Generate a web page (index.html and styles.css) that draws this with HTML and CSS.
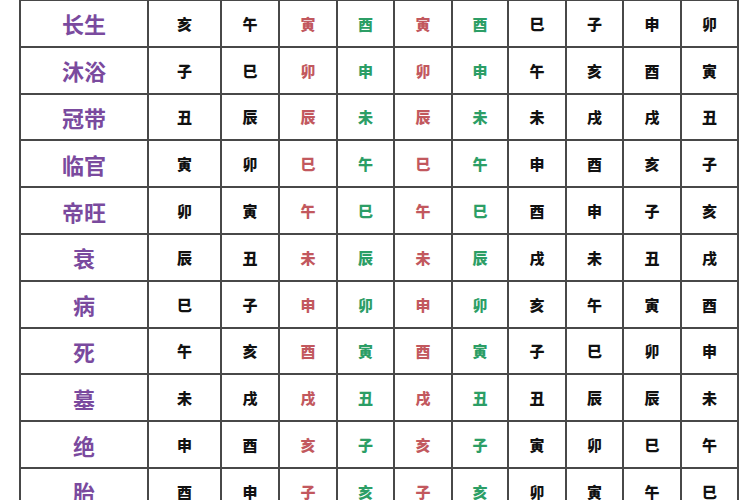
FILE: index.html
```html
<!DOCTYPE html>
<html lang="zh">
<head>
<meta charset="utf-8">
<title>十二长生表</title>
<link rel="stylesheet" href="styles.css">
</head>
<body>
<div class="table">
  <div class="lbl">长生</div><div class="c">亥</div><div class="c">午</div><div class="c r">寅</div><div class="c g">酉</div><div class="c r">寅</div><div class="c g">酉</div><div class="c">巳</div><div class="c">子</div><div class="c">申</div><div class="c">卯</div>
  <div class="lbl">沐浴</div><div class="c">子</div><div class="c">巳</div><div class="c r">卯</div><div class="c g">申</div><div class="c r">卯</div><div class="c g">申</div><div class="c">午</div><div class="c">亥</div><div class="c">酉</div><div class="c">寅</div>
  <div class="lbl">冠带</div><div class="c">丑</div><div class="c">辰</div><div class="c r">辰</div><div class="c g">未</div><div class="c r">辰</div><div class="c g">未</div><div class="c">未</div><div class="c">戌</div><div class="c">戌</div><div class="c">丑</div>
  <div class="lbl">临官</div><div class="c">寅</div><div class="c">卯</div><div class="c r">巳</div><div class="c g">午</div><div class="c r">巳</div><div class="c g">午</div><div class="c">申</div><div class="c">酉</div><div class="c">亥</div><div class="c">子</div>
  <div class="lbl">帝旺</div><div class="c">卯</div><div class="c">寅</div><div class="c r">午</div><div class="c g">巳</div><div class="c r">午</div><div class="c g">巳</div><div class="c">酉</div><div class="c">申</div><div class="c">子</div><div class="c">亥</div>
  <div class="lbl">衰</div><div class="c">辰</div><div class="c">丑</div><div class="c r">未</div><div class="c g">辰</div><div class="c r">未</div><div class="c g">辰</div><div class="c">戌</div><div class="c">未</div><div class="c">丑</div><div class="c">戌</div>
  <div class="lbl">病</div><div class="c">巳</div><div class="c">子</div><div class="c r">申</div><div class="c g">卯</div><div class="c r">申</div><div class="c g">卯</div><div class="c">亥</div><div class="c">午</div><div class="c">寅</div><div class="c">酉</div>
  <div class="lbl">死</div><div class="c">午</div><div class="c">亥</div><div class="c r">酉</div><div class="c g">寅</div><div class="c r">酉</div><div class="c g">寅</div><div class="c">子</div><div class="c">巳</div><div class="c">卯</div><div class="c">申</div>
  <div class="lbl">墓</div><div class="c">未</div><div class="c">戌</div><div class="c r">戌</div><div class="c g">丑</div><div class="c r">戌</div><div class="c g">丑</div><div class="c">丑</div><div class="c">辰</div><div class="c">辰</div><div class="c">未</div>
  <div class="lbl">绝</div><div class="c">申</div><div class="c">酉</div><div class="c r">亥</div><div class="c g">子</div><div class="c r">亥</div><div class="c g">子</div><div class="c">寅</div><div class="c">卯</div><div class="c">巳</div><div class="c">午</div>
  <div class="lbl">胎</div><div class="c">酉</div><div class="c">申</div><div class="c r">子</div><div class="c g">亥</div><div class="c r">子</div><div class="c g">亥</div><div class="c">卯</div><div class="c">寅</div><div class="c">午</div><div class="c">巳</div>
</div>
</body>
</html>
```
FILE: styles.css
```css
html, body {
  margin: 0;
  padding: 0;
  background: #ffffff;
  overflow: hidden;
}
body {
  font-family: "Noto Sans CJK SC", "Noto Sans CJK TC", sans-serif;
}
.table {
  display: grid;
  grid-template-columns: 126px 71px 56px 56px 55px 56px 54px 56px 55px 56px 55px;
  grid-auto-rows: 44.8px;
  gap: 2px;
  padding: 0 2px 2px 2px;
  margin-left: 19px;
  margin-top: -1px;
  width: max-content;
  background: #484848;
  border-top: 2px solid #484848;
}
.lbl, .c {
  background: #ffffff;
  display: flex;
  align-items: center;
  justify-content: center;
}
.lbl {
  color: #7a4a9e;
  font-size: 22px;
  font-weight: 700;
}
.c {
  color: #111111;
  font-size: 15px;
  font-weight: 900;
}
.r {
  color: #c2585e;
}
.g {
  color: #2c9e66;
}
```
